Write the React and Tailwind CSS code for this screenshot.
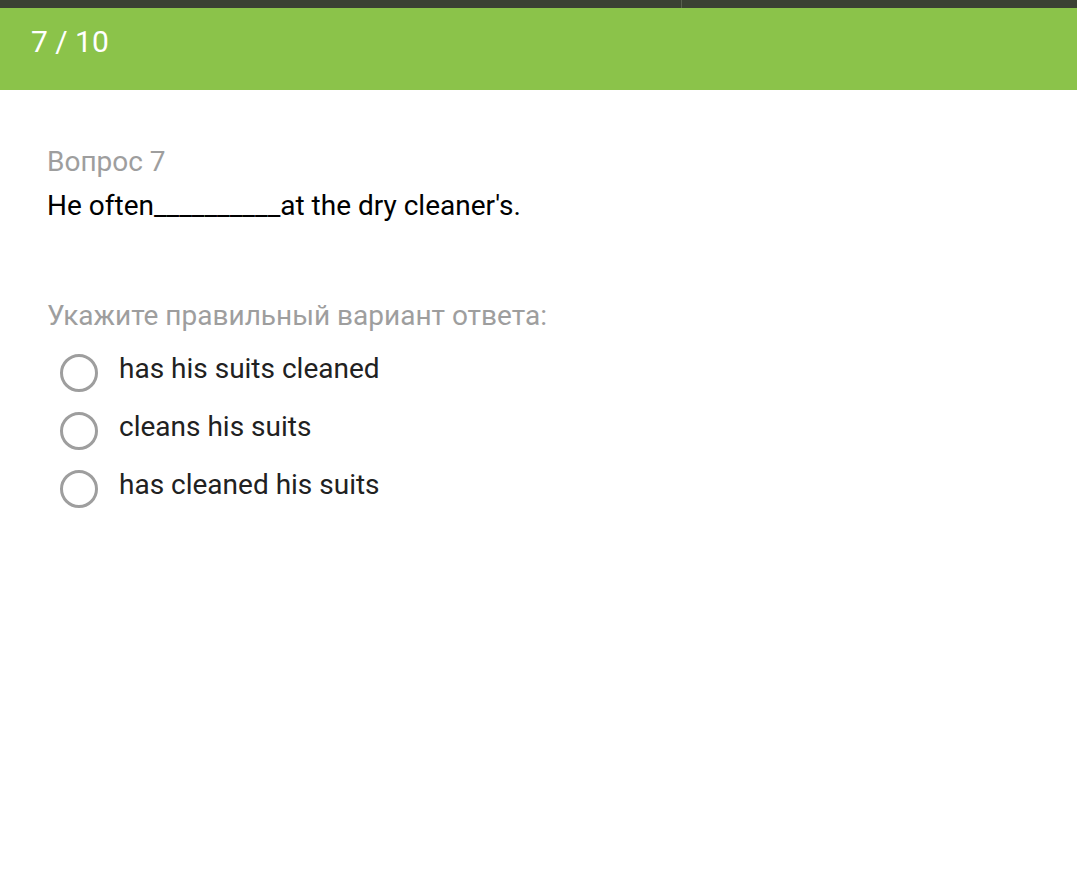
export default function App() {
  const options = ['has his suits cleaned', 'cleans his suits', 'has cleaned his suits']

  return (
    <div className="min-h-[881px] bg-white" style={{ fontFamily: 'Roboto, "Noto Sans", sans-serif' }}>
      <div className="flex h-[8px] bg-[#3b4133]">
        <div className="w-[682px] border-r border-[#59604f]" />
        <div className="flex-1" />
      </div>
      <header className="flex h-[82px] items-start bg-[#8bc34a] px-[31px] pt-[20px]">
        <span className="text-[30px] leading-[28px] text-white">7 / 10</span>
      </header>

      <main className="px-[47px] pt-[56px]">
        <div className="text-[28px] leading-[32px] text-[#9e9e9e]">Вопрос 7</div>
        <div className="mt-[12px] text-[28px] leading-[32px] text-black">He often__________at the dry cleaner's.</div>

        <div className="mt-[78px] text-[28px] leading-[32px] text-[#9e9e9e]">Укажите правильный вариант ответа:</div>
        <div className="mt-[22px] flex flex-col gap-[20px]">
          {options.map((opt) => (
            <label key={opt} className="flex items-center">
              <span className="ml-[13px] h-[38px] w-[38px] shrink-0 rounded-full border-[3px] border-[#9e9e9e]" />
              <span className="ml-[21px] -mt-[8px] text-[28px] leading-[32px] text-[#212121]">{opt}</span>
            </label>
          ))}
        </div>
      </main>
    </div>
  )
}
